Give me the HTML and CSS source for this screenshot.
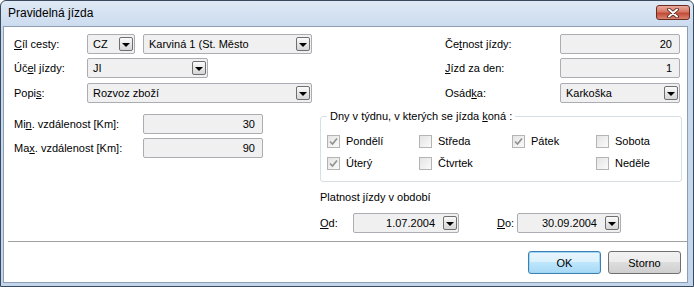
FILE: index.html
```html
<!DOCTYPE html>
<html lang="cs">
<head>
  <meta charset="UTF-8">
  <title>Pravidelná jízda</title>
  <link rel="stylesheet" href="styles.css">
</head>
<body>

  <div class="window">

    <!-- Title bar -->
    <div class="titlebar">
      <span class="title">Pravidelná jízda</span>
      <div class="close">
        <svg width="14" height="10" viewBox="0 0 14 10">
          <path d="M3 1.5 L11 8.5 M11 1.5 L3 8.5" stroke="#4a1d18" stroke-width="3.6" stroke-linecap="round"/>
          <path d="M3 1.5 L11 8.5 M11 1.5 L3 8.5" stroke="#fff" stroke-width="2" stroke-linecap="round"/>
        </svg>
      </div>
    </div>

    <div class="client">

      <!-- Top fields -->
      <div class="top">
        <div class="col col-left">
          <div class="row">
            <span class="lbl lbl-a"><u>C</u>íl cesty:</span>
            <div class="field combo w-cz">CZ<span class="drop"></span></div>
            <div class="field combo w-city">Karviná 1 (St. Město<span class="drop"></span></div>
          </div>
          <div class="row">
            <span class="lbl lbl-a">Úč<u>e</u>l jízdy:</span>
            <div class="field combo w-ji">JI<span class="drop"></span></div>
          </div>
          <div class="row r3">
            <span class="lbl lbl-a">Popi<u>s</u>:</span>
            <div class="field combo w-popis">Rozvoz zboží<span class="drop"></span></div>
          </div>
        </div>
        <div class="col col-right">
          <div class="row">
            <span class="lbl lbl-b">Če<u>t</u>nost jízdy:</span>
            <div class="field num w-right">20</div>
          </div>
          <div class="row">
            <span class="lbl lbl-b"><u>J</u>ízd za den:</span>
            <div class="field num w-right">1</div>
          </div>
          <div class="row r3">
            <span class="lbl lbl-b">Osád<u>k</u>a:</span>
            <div class="field combo w-right">Karkoška<span class="drop"></span></div>
          </div>
        </div>
      </div>

      <!-- Distances, days and validity -->
      <div class="bottom">
        <div class="col dist">
          <div class="row">
            <span class="lbl lbl-c">Mi<u>n</u>. vzdálenost [Km]:</span>
            <div class="field num w-right">30</div>
          </div>
          <div class="row">
            <span class="lbl lbl-c">Ma<u>x</u>. vzdálenost [Km]:</span>
            <div class="field num w-right">90</div>
          </div>
        </div>

        <div class="panel">
          <fieldset class="days">
            <legend>Dny v týdnu, v kterých se jízda <u>k</u>oná :</legend>
            <div class="days-grid">
              <label class="cb"><span class="box checked"></span>Pondělí</label>
              <label class="cb"><span class="box"></span>Středa</label>
              <label class="cb"><span class="box checked"></span>Pátek</label>
              <label class="cb"><span class="box"></span>Sobota</label>
              <label class="cb"><span class="box checked"></span>Úterý</label>
              <label class="cb"><span class="box"></span>Čtvrtek</label>
              <span></span>
              <label class="cb"><span class="box"></span>Neděle</label>
            </div>
          </fieldset>

          <div class="validity">Platnost jízdy v období</div>

          <div class="dates">
            <span class="lbl lbl-od"><u>O</u>d:</span>
            <div class="field date w-od">1.07.2004<span class="drop"></span></div>
            <span class="lbl lbl-do"><u>D</u>o:</span>
            <div class="field date w-do">30.09.2004<span class="drop"></span></div>
          </div>
        </div>
      </div>

      <!-- Buttons -->
      <div class="footer">
        <button class="btn btn-default">OK</button>
        <button class="btn">Storno</button>
      </div>

    </div>
  </div>

</body>
</html>
```

FILE: styles.css
```css
* {
  box-sizing: border-box;
  margin: 0;
  padding: 0;
}
body {
  font-family: "Liberation Sans", Arial, sans-serif;
  font-size: 11px;
  color: #000;
  background: #fff;
}
u {
  text-decoration: underline;
  text-underline-offset: 1px;
}

/* Window frame */
.window {
  width: 694px;
  height: 287px;
  display: flex;
  flex-direction: column;
  border: 1px solid #3a4a5e;
  border-radius: 6px 6px 0 0;
  background: linear-gradient(#dfe9f5, #cbdbee 26px, #c2d5eb);
}
.titlebar {
  height: 25px;
  display: flex;
  justify-content: space-between;
  padding: 0 3px 0 7px;
}
.title {
  font-size: 12px;
  line-height: 25px;
}
.close {
  width: 34px;
  height: 15px;
  margin-top: 4px;
  display: flex;
  align-items: center;
  justify-content: center;
  border: 1px solid #6b2a22;
  border-radius: 3px;
  background: linear-gradient(#e9a99c, #d67865 45%, #c24a36 55%, #d8836d);
}
.client {
  flex: 1;
  display: flex;
  flex-direction: column;
  margin: 0 5px 3px 2px;
  padding: 7px 0 0 10px;
  background: #fff;
  border: 1px solid #8d9db3;
}

/* Rows and fields */
.top {
  display: flex;
  justify-content: space-between;
  padding-right: 7px;
}
.col {
  display: flex;
  flex-direction: column;
  gap: 4px;
}
.row {
  display: flex;
  align-items: center;
  height: 20px;
}
.row.r3 {
  margin-top: 1px;
}
.lbl-a { width: 73px; }
.lbl-b { width: 115px; }
.lbl-c { width: 129px; }
.lbl-od { width: 33px; }
.lbl-do { width: 20px; margin-left: 38px; }

.field {
  height: 20px;
  display: flex;
  align-items: center;
  padding: 0 6px 0 5px;
  border: 1px solid #abadb3;
  border-radius: 2px;
  background: #f0f0f0;
  white-space: nowrap;
}
.field.num {
  justify-content: flex-end;
  padding-right: 7px;
}
.field.combo {
  justify-content: space-between;
  padding-right: 1px;
}
.field.date {
  justify-content: flex-end;
  padding-right: 1px;
}
.field.date .drop {
  margin-left: 8px;
}
.w-cz { width: 48px; }
.w-city { width: 169px; margin-left: 8px; }
.w-ji { width: 121px; }
.w-popis { width: 225px; }
.w-right { width: 120px; }
.w-od { width: 106px; }
.w-do { width: 104px; }

.drop {
  width: 14px;
  height: 14px;
  flex: none;
  display: flex;
  align-items: center;
  justify-content: center;
  border: 1px solid #6f6f6f;
  border-radius: 2px;
  background: linear-gradient(#fbfbfb, #e6e6e6 50%, #d6d6d6);
}
.drop::after {
  content: "";
  margin-top: 1px;
  border-left: 4px solid transparent;
  border-right: 4px solid transparent;
  border-top: 4px solid #000;
}

/* Lower part */
.bottom {
  display: flex;
  align-items: flex-start;
}
.dist {
  width: 306px;
  margin-top: 11px;
}
.panel {
  width: 362px;
  margin-top: 7px;
}
.days {
  border: 1px solid #d5dfe5;
  border-radius: 3px;
  padding: 10px 6px 10px 6px;
}
.days legend {
  padding: 0 3px;
  line-height: 13px;
}
.days-grid {
  display: grid;
  grid-template-columns: 92px 93px 84px auto;
  row-gap: 6px;
}
.cb {
  display: flex;
  align-items: center;
  gap: 6px;
  height: 16px;
}
.box {
  width: 13px;
  height: 13px;
  border: 1px solid #b4b4b4;
  background: linear-gradient(135deg, #e4e4e4, #fafafa);
}
.box.checked {
  background: url("data:image/svg+xml,%3Csvg xmlns='http://www.w3.org/2000/svg' width='11' height='11'%3E%3Cpath d='M2 5.5 L4.5 8 L9 2.5' fill='none' stroke='%23909090' stroke-width='1.6'/%3E%3C/svg%3E") center no-repeat,
              linear-gradient(135deg, #e4e4e4, #fafafa);
}
.validity {
  margin-top: 9px;
  line-height: 13px;
}
.dates {
  display: flex;
  align-items: center;
  margin-top: 9px;
}

/* Footer */
.footer {
  display: flex;
  justify-content: flex-end;
  gap: 7px;
  margin: 8px 0 0 -6px;
  padding: 9px 6px 0 0;
  border-top: 1px solid #a0a0a0;
}
.btn {
  width: 73px;
  height: 23px;
  font-family: inherit;
  font-size: 11px;
  color: #000;
  border: 1px solid #707070;
  border-radius: 3px;
  background: linear-gradient(#f2f2f2, #ebebeb 50%, #dddddd 50%, #cfcfcf);
}
.btn-default {
  border-color: #3c7fb1;
  background: linear-gradient(#eaf6fd, #d9f0fc 50%, #bee6fd 50%, #a7d9f5);
  box-shadow: inset 0 0 0 1px #9fd6f4;
}
```
